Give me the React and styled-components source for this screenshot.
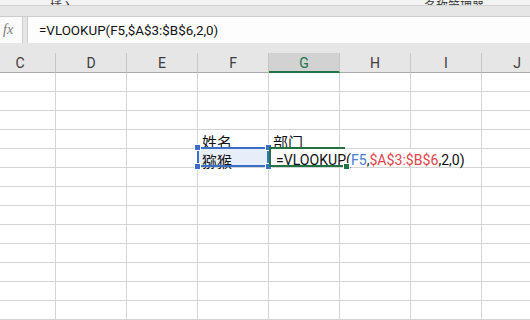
import React from 'react'
import styled, { createGlobalStyle } from 'styled-components'

const GlobalStyle = createGlobalStyle`
  html, body {
    margin: 0;
    padding: 0;
    background: #ffffff;
    overflow: hidden;
  }
`

const LATIN = `Roboto, 'Liberation Sans', 'Noto Sans CJK SC', sans-serif`
const CJK = `'Noto Sans CJK SC', Roboto, sans-serif`
const GREEN = '#217346'
const BLUE = '#3a6fc7'

const COLS = ['C', 'D', 'E', 'F', 'G', 'H', 'I', 'J']
const ROW_COUNT = 13

const Page = styled.div`
  width: 530px;
  height: 320px;
  overflow: hidden;
  display: flex;
  flex-direction: column;
  font-family: ${LATIN};
`

const Ribbon = styled.div`
  height: 5px;
  background: #f3f3f3;
  border-bottom: 1px solid #d3d3d3;
  display: flex;
  align-items: flex-end;
  overflow: hidden;
`

const RibbonText = styled.span`
  font-family: ${CJK};
  font-size: 12px;
  line-height: 8px;
  color: #333;
  white-space: nowrap;
  margin-left: ${(p) => p.$left}px;
  margin-bottom: -5px;
`

const RibbonTick = styled.span`
  width: 1px;
  height: 3px;
  background: #b8b8b8;
  margin-left: ${(p) => p.$left}px;
`

const ToolArea = styled.div`
  background: #e6e6e6;
  padding-bottom: 10px;
`

const Band = styled.div`
  height: 10px;
  border-bottom: 1px solid #cdcdcd;
`

const FormulaRow = styled.div`
  height: 26px;
  display: flex;
  gap: 4px;
`

const FxBox = styled.div`
  width: 23px;
  background: #fbfbfb;
  border-right: 1px solid #cdcdcd;
  display: flex;
  align-items: center;
  padding-left: 3px;
  box-sizing: border-box;
  font-family: 'Liberation Serif', serif;
  font-style: italic;
  font-size: 14px;
  color: #7a7a7a;
`

const FormulaInput = styled.div`
  flex: 1;
  background: #fdfdfd;
  border-left: 1px solid #cdcdcd;
  display: flex;
  align-items: center;
  padding-left: 11px;
  font-size: 13.4px;
  color: #111;
  white-space: nowrap;
`

const Sheet = styled.div`
  margin-left: -15px;
  display: grid;
  grid-template-columns: repeat(${COLS.length}, 71px);
`

const HeadCell = styled.div`
  height: 20px;
  box-sizing: border-box;
  background: ${(p) => (p.$active ? '#d2d2d2' : '#e6e6e6')};
  border-right: 1px solid #c6c6c6;
  border-bottom: ${(p) => (p.$active ? `2px solid ${GREEN}` : '1px solid #ababab')};
  display: flex;
  align-items: center;
  justify-content: center;
  font-size: 14px;
  padding-top: 1px;
  color: ${(p) => (p.$active ? GREEN : '#3c3c3c')};
`

const Cell = styled.div`
  position: relative;
  height: 19px;
  box-sizing: border-box;
  border-right: 1px solid #d4d4d4;
  border-bottom: 1px solid #d4d4d4;
  background: ${(p) => (p.$picked ? '#e8eef9' : 'transparent')};
  display: flex;
  align-items: flex-end;
  padding-left: 4px;
  font-family: ${CJK};
  font-size: 15px;
  line-height: 15px;
  color: #111;
  white-space: nowrap;
`

const CellText = styled.span`
  position: relative;
  top: 1px;
`

const RangeFrame = styled.div`
  position: absolute;
  top: -2px;
  left: -1px;
  width: 72px;
  height: 20px;
  box-sizing: border-box;
  border: 2px solid ${BLUE};
  z-index: 3;
  pointer-events: none;
`

const Handle = styled.span`
  position: absolute;
  width: 5px;
  height: 5px;
  background: ${(p) => p.$color};
  box-shadow: 0 0 0 1px #ffffff;
  ${(p) => (p.$top ? 'top: -4px;' : 'bottom: -4px;')}
  ${(p) => (p.$left ? 'left: -4px;' : 'right: -4px;')}
`

const EditFrame = styled.div`
  position: absolute;
  top: -2px;
  left: 0;
  width: 76px;
  height: 20px;
  box-sizing: border-box;
  border: 2px solid ${GREEN};
  border-right: none;
  z-index: 4;
  pointer-events: none;
`

const EditText = styled.div`
  position: absolute;
  left: 0;
  top: 0;
  height: 17px;
  padding: 0 6px 0 7px;
  background: #ffffff;
  z-index: 2;
  display: flex;
  align-items: flex-end;
  font-family: ${LATIN};
  font-size: 14.1px;
  line-height: 12px;
  color: #111;
  white-space: nowrap;
`

const Token = styled.span`
  color: ${(p) => p.$color || 'inherit'};
`

const Formula = () => (
  <>
    =VLOOKUP(<Token $color='#4a7bd6'>F5</Token>,
    <Token $color='#e2434d'>$A$3:$B$6</Token>,2,0)
  </>
)

const cellContent = (row, col) => {
  if (row === 3 && col === 'F') return <CellText>姓名</CellText>
  if (row === 3 && col === 'G') return <CellText>部门</CellText>
  if (row === 4 && col === 'F')
    return (
      <>
        <CellText>猕猴</CellText>
        <RangeFrame>
          <Handle $color={BLUE} $top $left />
          <Handle $color={BLUE} $top />
          <Handle $color={BLUE} $left />
          <Handle $color={BLUE} />
        </RangeFrame>
      </>
    )
  if (row === 4 && col === 'G')
    return (
      <>
        <EditText>
          <Formula />
        </EditText>
        <EditFrame>
          <Handle $color={GREEN} />
        </EditFrame>
      </>
    )
  return null
}

const App = () => {
  const rows = Array.from({ length: ROW_COUNT }, (_, i) => i)
  return (
    <Page>
      <GlobalStyle />
      <Ribbon>
        <RibbonText $left={50}>插入</RibbonText>
        <RibbonTick $left={290} />
        <RibbonText $left={60}>名称管理器</RibbonText>
        <RibbonTick $left={55} />
      </Ribbon>
      <ToolArea>
        <Band />
        <FormulaRow>
          <FxBox>fx</FxBox>
          <FormulaInput>=VLOOKUP(F5,$A$3:$B$6,2,0)</FormulaInput>
        </FormulaRow>
      </ToolArea>
      <Sheet>
        {COLS.map((c) => (
          <HeadCell key={c} $active={c === 'G'}>
            {c}
          </HeadCell>
        ))}
        {rows.map((r) =>
          COLS.map((c) => (
            <Cell key={`${c}${r}`} $picked={r === 4 && c === 'F'}>
              {cellContent(r, c)}
            </Cell>
          ))
        )}
      </Sheet>
    </Page>
  )
}

export default App
